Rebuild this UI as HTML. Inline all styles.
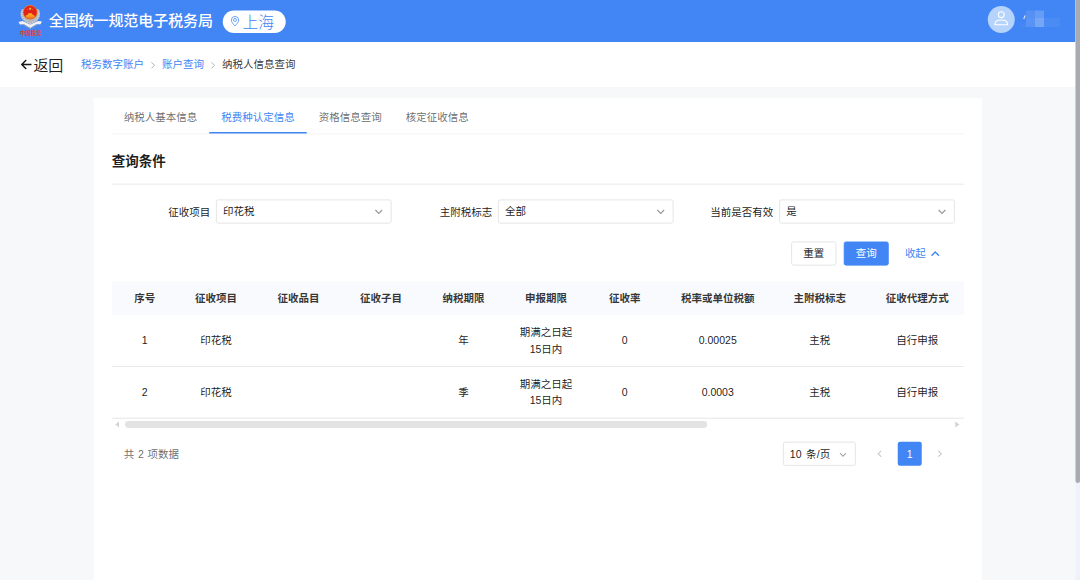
<!DOCTYPE html>
<html lang="zh-CN">
<head>
<meta charset="utf-8">
<title>纳税人信息查询</title>
<style>
*{box-sizing:border-box;margin:0;padding:0}
html,body{width:1080px;height:580px;overflow:hidden;background:#f7f8fa}
body{font-family:"Liberation Sans","Noto Sans CJK SC",sans-serif;color:rgba(0,0,0,.9);font-size:14px}
#stage{position:absolute;left:0;top:0;width:1440px;height:774px;transform:scale(.75);transform-origin:0 0;background:#f7f8fa;overflow:hidden}
.abs{position:absolute}
/* header */
#hdr{position:absolute;left:0;top:0;width:1434px;height:56px;background:#4285f4}
#hdr .title{position:absolute;left:65px;top:0;line-height:57.2px;font-size:20px;color:#fff;font-weight:500;letter-spacing:-.1px;white-space:nowrap}
#hdr .pill{position:absolute;left:297px;top:13.7px;width:84px;height:30px;border-radius:15px;background:#fff;color:#4285f4;font-size:20px;line-height:28px;white-space:nowrap}
#hdr .pill span{position:absolute;left:26.3px;top:2.3px;font-size:21px;font-weight:300}
#hdr .pill svg{position:absolute;left:10px;top:6.3px}
#hdr .avatar{position:absolute;left:1317px;top:8px;width:36px;height:36px;border-radius:50%;background:#b5d3fb}
/* sub bar */
#bar{position:absolute;left:0;top:56px;width:1434px;height:60px;background:#fff}
#bar .back{position:absolute;left:44.5px;top:2.5px;line-height:59px;font-size:20px;color:rgba(0,0,0,.88);white-space:nowrap}
#bar .crumb{position:absolute;left:108px;top:1px;line-height:59px;font-size:14px;white-space:nowrap;color:rgba(0,0,0,.9)}
#bar .crumb a{color:#4285f4;text-decoration:none}
#bar .crumb i{font-style:normal;color:rgba(0,0,0,.4);margin:0 8px}
/* card */
#card{position:absolute;left:125px;top:131px;width:1184px;height:660px;background:#fff}
.tabs{position:absolute;left:24px;top:0;width:1136px;height:48px;border-bottom:1px solid #f0f0f0}
.tab{position:absolute;top:0;height:47px;line-height:50px;font-size:14px;color:rgba(0,0,0,.6);white-space:nowrap}
.tab.on{color:#4285f4}
.tab.on:after{content:"";position:absolute;left:-16px;right:-16px;bottom:0;height:2px;background:#4285f4}
.h2{position:absolute;left:24px;top:69px;font-size:18px;font-weight:700;line-height:30px;color:rgba(0,0,0,.9)}
.hr{position:absolute;left:24px;width:1136px;height:1px;background:#e4e4e4}
.lbl{position:absolute;top:135.5px;height:32px;line-height:32px;font-size:14px;text-align:right;width:130px;white-space:nowrap}
.sel{position:absolute;top:135px;height:32px;width:233.3px;border:1px solid #dcdcdc;border-radius:3px;line-height:31px;padding-left:8px;font-size:14px;background:#fff}
.sel svg{position:absolute;right:9px;top:8px}
.btn{position:absolute;top:191px;height:32px;width:60px;border-radius:3px;font-size:14px;line-height:30px;text-align:center;border:1px solid #dcdcdc;background:#fff}
.btn.pri{background:#4285f4;border-color:#4285f4;color:#fff}
/* table */
.thead{position:absolute;left:24px;top:243.5px;width:1136px;height:45.5px;background:#f9fafd}
.c{position:absolute;width:160px;text-align:center;font-size:14px;white-space:nowrap}
.thead .c{top:-.5px;line-height:46px;font-weight:700;color:rgba(0,0,0,.8)}
.row{position:absolute;left:24px;width:1136px;height:69px;border-bottom:1px solid #e2e2e2}
.row .c{top:0;line-height:68.4px}
.row .c.two{line-height:22px;top:12.2px}
</style>
</head>
<body>
<div id="stage">

<div id="hdr">
  <svg class="abs" style="left:20px;top:0" width="42" height="56" viewBox="20 0 42 56">
    <defs>
      <linearGradient id="gg" x1="0" y1="0" x2="0" y2="1"><stop offset="0" stop-color="#f9b51f"/><stop offset=".55" stop-color="#f5921e"/><stop offset="1" stop-color="#ee5a1c"/></linearGradient>
      <clipPath id="cc"><circle cx="40.2" cy="16.4" r="8.8"/></clipPath>
    </defs>
    <path d="M24.6 29.2 L30 28 L40.3 32.8 L50.6 28 L56 28.8 L54 32.4 L48.5 32.2 L40.3 37.2 L32 32.2 L26.6 32.6 Z" fill="#f1f2f5"/>
    <path d="M28 32.6 L32 32.3 L40.3 37.3 L48.5 32.3 L52.6 32.5 L48.8 33.7 L40.3 38.5 L31.8 33.7 Z" fill="#a4a9b3" opacity=".85"/>
    <path d="M29.6 12 C25.6 17 25.6 27.5 40.4 32.6 C55.2 27.5 55.2 17 51.2 12 Z" fill="#b3b7c0"/>
    <path d="M30 14.5 C27.6 19 28.4 26.4 40.4 30.8 C52.4 26.4 53.2 19 50.8 14.5" fill="none" stroke="#dcdfe4" stroke-width="1.4" stroke-dasharray="1.3 1.7"/>
    <circle cx="40.2" cy="16.4" r="9.6" fill="#ee7a1e"/>
    <circle cx="40.2" cy="16.4" r="8.8" fill="#e1231c"/>
    <g clip-path="url(#cc)"><path d="M33.4 26 L34.4 20.6 L37 19.4 L38.2 17.8 L42.2 17.8 L43.4 19.4 L46 20.6 L47 26 Z" fill="url(#gg)"/></g>
    <path d="M40.2 9.3 l.6 1.3 1.4.2 -1 1 .25 1.4 -1.25-.7 -1.25.7 .25-1.4 -1-1 1.4-.2z" fill="#f6b73a"/>
    <circle cx="36.6" cy="12.2" r=".6" fill="#f6b73a"/><circle cx="43.8" cy="12.2" r=".6" fill="#f6b73a"/>
    <text x="40.9" y="46.4" font-size="7.2" font-weight="700" fill="#e4411f" text-anchor="middle" font-family="'Liberation Sans','Noto Sans CJK SC',sans-serif">中国税务</text>
  </svg>
  <div class="title">全国统一规范电子税务局</div>
  <div class="pill">
    <svg width="14" height="17" viewBox="0 0 14 17" fill="none" stroke="#5a95f5" stroke-width="1.15"><path d="M6.35 14.6 C3.4 11.6 1.5 9.4 1.5 6.75 A4.85 4.85 0 0 1 11.2 6.75 C11.2 9.4 9.3 11.6 6.35 14.6 Z"/><circle cx="6.35" cy="6.6" r="2"/></svg>
    <span>上海</span>
  </div>
  <div class="avatar">
    <svg width="36" height="36" viewBox="0 0 36 36" fill="none" stroke="#fff" stroke-width="1.4"><circle cx="18" cy="11.6" r="3.9"/><path d="M9.4 25 C9.4 20.6 13 18.6 18 18.6 C23 18.6 26.6 20.6 26.6 25 Z" stroke-linejoin="round"/></svg>
  </div>
  <div class="abs" style="left:1368px;top:13.6px;width:11.8px;height:10.6px;background:rgba(255,255,255,.1)"></div>
  <div class="abs" style="left:1379.8px;top:13.6px;width:12px;height:10.6px;background:rgba(255,255,255,.19)"></div>
  <div class="abs" style="left:1368px;top:24.2px;width:11.8px;height:11.8px;background:rgba(255,255,255,.12)"></div>
  <div class="abs" style="left:1379.8px;top:24.2px;width:12px;height:11.8px;background:rgba(255,255,255,.28)"></div>
  <div class="abs" style="left:1391.8px;top:24.2px;width:21px;height:11.8px;background:rgba(255,255,255,.05)"></div>
  <svg class="abs" style="left:1358px;top:18px" width="12" height="18" viewBox="0 0 12 18"><path d="M8.2 2.4 L9.6 3 L7.6 7.6 L6.2 7 Z" fill="#fff" opacity=".8"/><path d="M2 18 L10 12 L10 18 Z" fill="#fff" opacity=".04"/></svg>
</div>

<div id="bar">
  <svg class="abs" style="left:27.8px;top:23px" width="15" height="14" viewBox="0 0 15 14" fill="none" stroke="rgba(0,0,0,.9)" stroke-width="1.9"><path d="M14 7 H1 M7 1 L1 7 L7 13"/></svg>
  <div class="back">返回</div>
  <div class="crumb"><a>税务数字账户</a><svg style="margin:0 8px;vertical-align:-1.5px" width="8" height="12" viewBox="0 0 8 12" fill="none" stroke="#a8a8a8" stroke-width="1.2"><path d="M2 2 L6 6 L2 10"/></svg><a>账户查询</a><svg style="margin:0 8px;vertical-align:-1.5px" width="8" height="12" viewBox="0 0 8 12" fill="none" stroke="#a8a8a8" stroke-width="1.2"><path d="M2 2 L6 6 L2 10"/></svg><span style="color:rgba(0,0,0,.82)">纳税人信息查询</span></div>
</div>

<div id="card">
  <div class="tabs">
    <div class="tab" style="left:16px">纳税人基本信息</div>
    <div class="tab on" style="left:146px">税费种认定信息</div>
    <div class="tab" style="left:276px">资格信息查询</div>
    <div class="tab" style="left:392px">核定征收信息</div>
  </div>
  <div class="h2">查询条件</div>
  <div class="hr" style="top:114px"></div>

  <div class="lbl" style="left:25.3px">征收项目</div>
  <div class="sel" style="left:163.3px">印花税<svg width="14" height="14" viewBox="0 0 14 14" fill="none" stroke="#999" stroke-width="1.6"><path d="M2.5 5 L7 9.5 L11.5 5"/></svg></div>
  <div class="lbl" style="left:401.3px">主附税标志</div>
  <div class="sel" style="left:539.3px">全部<svg width="14" height="14" viewBox="0 0 14 14" fill="none" stroke="#999" stroke-width="1.6"><path d="M2.5 5 L7 9.5 L11.5 5"/></svg></div>
  <div class="lbl" style="left:776px">当前是否有效</div>
  <div class="sel" style="left:914.3px">是<svg width="14" height="14" viewBox="0 0 14 14" fill="none" stroke="#999" stroke-width="1.6"><path d="M2.5 5 L7 9.5 L11.5 5"/></svg></div>

  <div class="btn" style="left:930px">重置</div>
  <div class="btn pri" style="left:1000px">查询</div>
  <div class="abs" style="left:1081.5px;top:191px;line-height:32px;font-size:14px;color:#4285f4;white-space:nowrap">收起<svg style="margin-left:5px;vertical-align:-2px" width="14" height="14" viewBox="0 0 14 14" fill="none" stroke="#4285f4" stroke-width="1.8"><path d="M2 10 L7 5 L12 10"/></svg></div>

  <div class="thead">
    <div class="c" style="left:-36px">序号</div>
    <div class="c" style="left:59px">征收项目</div>
    <div class="c" style="left:169px">征收品目</div>
    <div class="c" style="left:279px">征收子目</div>
    <div class="c" style="left:389px">纳税期限</div>
    <div class="c" style="left:499px">申报期限</div>
    <div class="c" style="left:604px">征收率</div>
    <div class="c" style="left:728px">税率或单位税额</div>
    <div class="c" style="left:864px">主附税标志</div>
    <div class="c" style="left:994px">征收代理方式</div>
  </div>
  <div class="row" style="top:289px">
    <div class="c" style="left:-36px">1</div>
    <div class="c" style="left:59px">印花税</div>
    <div class="c" style="left:389px">年</div>
    <div class="c two" style="left:499px">期满之日起<br>15日内</div>
    <div class="c" style="left:604px">0</div>
    <div class="c" style="left:728px">0.00025</div>
    <div class="c" style="left:864px">主税</div>
    <div class="c" style="left:994px">自行申报</div>
  </div>
  <div class="row" style="top:358px;border-bottom-color:#dedede">
    <div class="c" style="left:-36px">2</div>
    <div class="c" style="left:59px">印花税</div>
    <div class="c" style="left:389px">季</div>
    <div class="c two" style="left:499px">期满之日起<br>15日内</div>
    <div class="c" style="left:604px">0</div>
    <div class="c" style="left:728px">0.0003</div>
    <div class="c" style="left:864px">主税</div>
    <div class="c" style="left:994px">自行申报</div>
  </div>

  <!-- horizontal scrollbar -->
  <svg class="abs" style="left:24px;top:428px" width="1136" height="14" viewBox="0 0 1136 14">
    <path d="M9.7 2.9 L4.7 7 L9.7 11.1 Z" fill="#d4d4d4"/>
    <path d="M1124.7 2.9 L1130.3 7 L1124.7 11.1 Z" fill="#d4d4d4"/>
    <rect x="17.7" y="2.4" width="776.3" height="9.2" rx="4.6" fill="#e3e3e3"/>
  </svg>

  <div class="abs" style="left:40px;top:458px;line-height:32px;font-size:14px;color:rgba(0,0,0,.6);white-space:nowrap;word-spacing:1px">共 2 项数据</div>
  <div class="abs" style="left:919px;top:458px;width:97px;height:32px;border:1px solid #dcdcdc;border-radius:3px;line-height:30px;padding-left:8px;font-size:14px;white-space:nowrap;word-spacing:1.5px;letter-spacing:.25px">10 条/页<svg style="position:absolute;right:9px;top:9px" width="14" height="14" viewBox="0 0 14 14" fill="none" stroke="#a5a5a5" stroke-width="1.45"><path d="M3 5.2 L7 9.2 L11 5.2"/></svg></div>
  <svg class="abs" style="left:1041px;top:467px" width="14" height="14" viewBox="0 0 14 14" fill="none" stroke="#c0c0c0" stroke-width="1.4"><path d="M9 3 L5 7 L9 11"/></svg>
  <div class="abs" style="left:1072px;top:458px;width:32px;height:32px;border-radius:3px;background:#4285f4;color:#fff;text-align:center;line-height:32px;font-size:14px">1</div>
  <svg class="abs" style="left:1121px;top:467px" width="14" height="14" viewBox="0 0 14 14" fill="none" stroke="#c0c0c0" stroke-width="1.4"><path d="M5 3 L9 7 L5 11"/></svg>
</div>

<!-- page scrollbar -->
<div class="abs" style="left:1434px;top:0;width:6px;height:774px;background:#f0f2fb"></div>
<div class="abs" style="left:1434px;top:0;width:6px;height:644px;background:#a9abb3;border-radius:0 0 3px 3px"></div>

</div>
</body>
</html>
